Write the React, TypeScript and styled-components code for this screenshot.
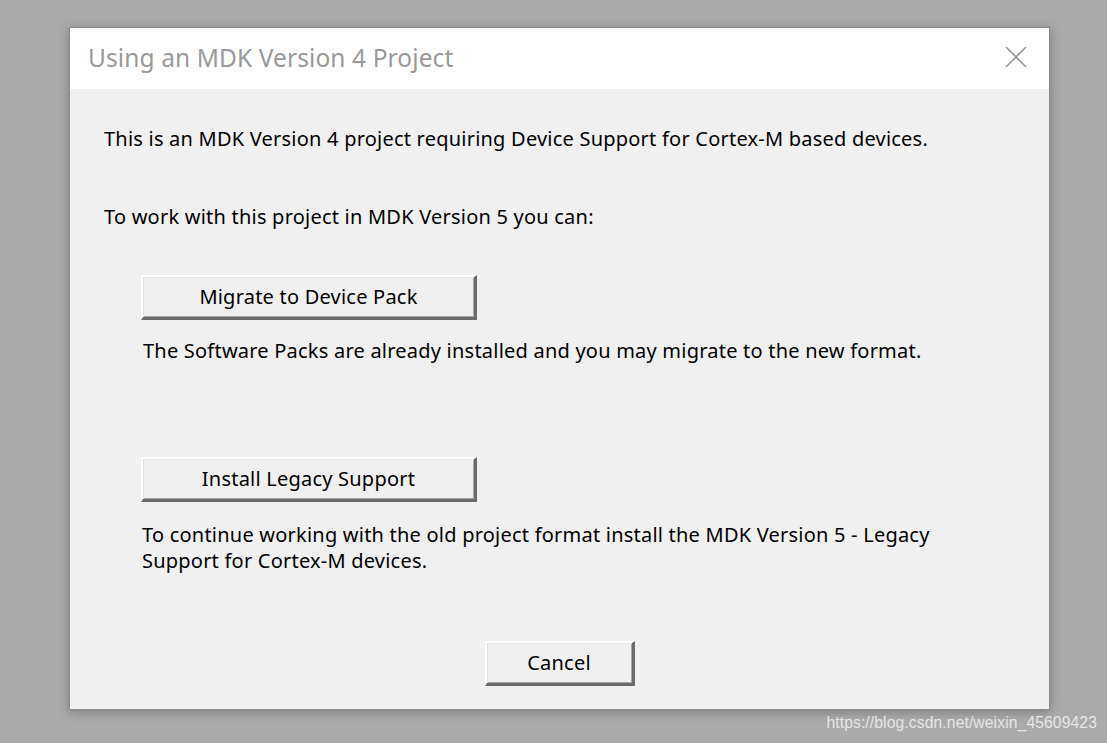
import React from "react";
import styled, { createGlobalStyle } from "styled-components";

const Global = createGlobalStyle`
  html, body { margin: 0; padding: 0; }
  body {
    background: #aaaaaa;
    width: 1107px;
    height: 743px;
    overflow: hidden;
    font-family: "Noto Sans", "Open Sans", sans-serif;
  }
`;

const Page = styled.div`
  position: relative;
  width: 1107px;
  height: 743px;
  padding: 27px 0 0 69px;
  box-sizing: border-box;
`;

const Dialog = styled.div`
  width: 981px;
  height: 683px;
  box-sizing: border-box;
  border: 1px solid #8a8a8a;
  background: #f0f0f0;
  box-shadow: 0 2px 10px rgba(0, 0, 0, 0.28);
  display: flex;
  flex-direction: column;
`;

const TitleBar = styled.div`
  height: 61px;
  flex: none;
  background: #ffffff;
  display: flex;
  align-items: center;
  justify-content: space-between;
  padding: 0 22px 0 18px;
`;

const Title = styled.div`
  color: #999999;
  font-size: 24.5px;
  letter-spacing: 0.1px;
  padding-bottom: 2px;
`;

const CloseBtn = styled.div`
  width: 22px;
  height: 22px;
  display: flex;
  align-items: center;
  justify-content: center;
  margin-top: -3px;
`;

const Body = styled.div`
  flex: 1;
  display: flex;
  flex-direction: column;
  padding: 37px 0 0 34px;
`;

const Text = styled.div<{ $indent?: number; $top?: number }>`
  font-size: 20px;
  letter-spacing: 0.22px;
  line-height: 26px;
  color: #000;
  margin-left: ${(p) => p.$indent ?? 0}px;
  margin-top: ${(p) => p.$top ?? 0}px;
  white-space: nowrap;
`;

const Button = styled.button<{ $w: number; $top: number }>`
  width: ${(p) => p.$w}px;
  height: 45px;
  margin-top: ${(p) => p.$top}px;
  box-sizing: border-box;
  background: #f0f0f0;
  border-style: solid;
  border-width: 2px 3px 3px 2px;
  border-color: #ffffff #6b6b6b #6b6b6b #ffffff;
  box-shadow: inset 1px 1px 0 #e3e3e3, inset -1px -1px 0 #a8a8a8;
  font-family: "Noto Sans", "Open Sans", sans-serif;
  font-size: 20px;
  letter-spacing: 0.22px;
  color: #000;
  padding: 0 0 2px 0;
  display: flex;
  align-items: center;
  justify-content: center;
  flex: none;
`;

const Indented = styled.div`
  margin-left: 37px;
  display: flex;
  flex-direction: column;
`;

const Footer = styled.div`
  display: flex;
  justify-content: center;
  margin-left: -34px;
`;

const Watermark = styled.div`
  position: absolute;
  right: 10px;
  bottom: 11px;
  font-family: "Liberation Sans", Arial, sans-serif;
  font-size: 15.7px;
  color: #e6e6e6;
  letter-spacing: 0.1px;
`;

export default function App() {
  return (
    <>
      <Global />
      <Page>
        <Dialog>
          <TitleBar>
            <Title>Using an MDK Version 4 Project</Title>
            <CloseBtn>
              <svg width="22" height="22" viewBox="0 0 22 22">
                <path d="M1 1 L21 21 M21 1 L1 21" stroke="#999" strokeWidth="1.6" fill="none" />
              </svg>
            </CloseBtn>
          </TitleBar>
          <Body>
            <Text>This is an MDK Version 4 project requiring Device Support for Cortex-M based devices.</Text>
            <Text $top={52}>To work with this project in MDK Version 5 you can:</Text>
            <Indented>
              <Button $w={336} $top={45}>Migrate to Device Pack</Button>
              <Text $indent={2} $top={18}>
                The Software Packs are already installed and you may migrate to the new format.
              </Text>
              <Button $w={336} $top={93}>Install Legacy Support</Button>
              <Text $indent={1} $top={20}>
                To continue working with the old project format install the MDK Version 5 - Legacy
                <br />
                Support for Cortex-M devices.
              </Text>
            </Indented>
            <Footer>
              <Button $w={150} $top={67}>Cancel</Button>
            </Footer>
          </Body>
        </Dialog>
        <Watermark>https://blog.csdn.net/weixin_45609423</Watermark>
      </Page>
    </>
  );
}
